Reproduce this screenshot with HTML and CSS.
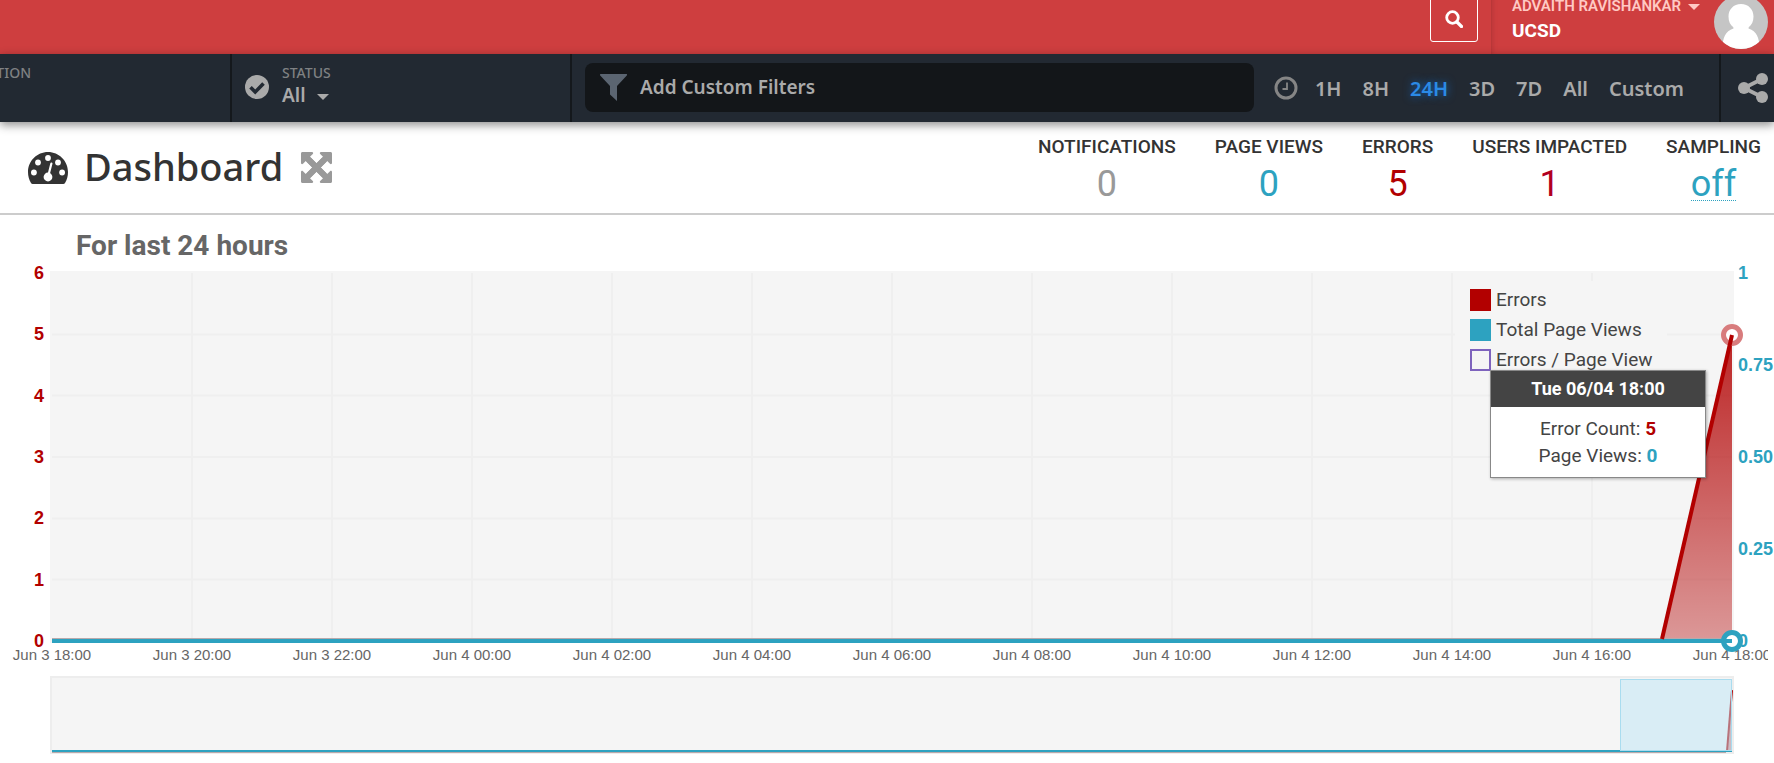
FILE: index.html
```html
<!DOCTYPE html>
<html lang="en">
<head>
<meta charset="utf-8">
<title>Dashboard</title>
<meta name="viewport" content="width=device-width, initial-scale=1">
<link rel="stylesheet" href="styles.css">
</head>
<body>
<header class="topbar">
  <button class="search" type="button" aria-label="Search">
    <svg viewBox="0 0 18 18" width="18" height="18"><circle cx="7.5" cy="7.5" r="5.8" fill="none" stroke="currentColor" stroke-width="2.8"/><path d="M12 12l4.5 4.5" stroke="currentColor" stroke-width="3.2" stroke-linecap="round"/></svg>
  </button>
  <div class="account">
    <button class="account-menu" type="button">
      <span class="account-name">ADVAITH RAVISHANKAR <i class="caret"></i></span>
      <span class="account-org">UCSD</span>
    </button>
    <svg class="avatar" viewBox="0 0 54 54" width="54" height="54" role="img" aria-label="Profile picture">
      <defs><clipPath id="round"><circle cx="27" cy="27" r="27"/></clipPath></defs>
      <g clip-path="url(#round)"><rect width="54" height="54" fill="#c5c5c5"/><g fill="#fff"><path d="M27 9c7.500 0 12.500 5.500 12.500 12.500 0 5-1.800 8.500-4.800 10.700l-.2 1.300C43 36 45 43 46 54H8c1-11 3-18 11.500-20.500l-.2-1.300c-3-2.200-4.800-5.700-4.800-10.700C14.500 14.500 19.500 9 27 9z"/></g></g>
    </svg>
  </div>
</header>

<nav class="filters">
  <div class="cell cell-location"><span class="cell-label">ATION</span></div>
  <div class="cell cell-status">
    <svg viewBox="0 0 24 24" width="24" height="24"><circle cx="12" cy="12" r="12" fill="#aaa"/><path d="M5.500 12.300l4.700 4.700 8.300-8.600" fill="none" stroke="#222932" stroke-width="3.600"/></svg>
    <div class="status">
      <span class="cell-label">STATUS</span>
      <button class="status-value" type="button">All <i class="caret"></i></button>
    </div>
  </div>
  <div class="cell cell-range">
    <button class="add-filter" type="button">
      <svg viewBox="0 0 27 27" width="27" height="27"><path d="M.5 0h26c.6 0 .7.900.3 1.400L17 12v15l-7-6.500V12L.2 1.400C-.2.900 0 0 .5 0z" fill="#5b6571"/></svg>
      Add Custom Filters
    </button>
    <div class="ranges">
      <svg viewBox="0 0 24 24" width="24" height="24" fill="none" stroke="#858585"><circle cx="12" cy="12" r="10" stroke-width="3"/><path d="M13 6.500V13H8.500" stroke-width="1.800"/></svg>
      <button type="button">1H</button>
      <button type="button">8H</button>
      <button type="button" class="active">24H</button>
      <button type="button">3D</button>
      <button type="button">7D</button>
      <button type="button">All</button>
      <button type="button">Custom</button>
    </div>
  </div>
  <button class="share" type="button" aria-label="Share">
    <svg viewBox="0 0 30 30" width="30" height="30"><path d="M24 6L6 15l18 9" fill="none" stroke="#aaa" stroke-width="3.800"/><g fill="#aaa"><circle cx="6" cy="15" r="6"/><circle cx="24" cy="6" r="6"/><circle cx="24" cy="24" r="6"/></g></svg>
  </button>
</nav>

<section class="heading">
  <svg viewBox="0 0 40 32" width="40" height="32"><path d="M20 0C9 0 0 9 0 20c0 4 1 7.700 3 11 .4.700.900 1 1.700 1h30.600c.8 0 1.300-.3 1.700-1 2-3.300 3-7 3-11C40 9 31 0 20 0z" fill="#333"/><g fill="#fff"><circle cx="20" cy="6" r="2.900"/><circle cx="10" cy="10.500" r="2.900"/><circle cx="30" cy="10.500" r="2.900"/><circle cx="5.900" cy="20.500" r="2.900"/><circle cx="34.100" cy="20.500" r="2.900"/><circle cx="20" cy="25" r="4.400"/></g><path d="M20.500 23l2.900-11.500" stroke="#fff" stroke-width="2.200" stroke-linecap="round"/></svg>
  <h1>Dashboard</h1>
  <button class="expand" type="button" aria-label="Full screen">
    <svg viewBox="0 0 31 31" width="31" height="31" fill="#999"><path id="arrow" d="M1.500 0H11c1.200 0 1.500 1.300.8 2L9 4.800 25.500 21.300 26 26 21.300 25.500 4.800 9 2 11.800c-.7.700-2 .4-2-.8V1.500C0 .6.600 0 1.500 0z"/><use href="#arrow" transform="rotate(90 15.500 15.500)"/><use href="#arrow" transform="rotate(180 15.500 15.500)"/><use href="#arrow" transform="rotate(270 15.500 15.500)"/></svg>
  </button>
  <dl class="stats">
    <div><dt>NOTIFICATIONS</dt><dd class="muted">0</dd></div>
    <div><dt>PAGE VIEWS</dt><dd class="blue">0</dd></div>
    <div><dt>ERRORS</dt><dd class="red">5</dd></div>
    <div><dt>USERS IMPACTED</dt><dd class="crimson">1</dd></div>
    <div><dt>SAMPLING</dt><dd><a href="#">off</a></dd></div>
  </dl>
</section>

<main class="chart">
  <h2>For last 24 hours</h2>
  <div class="plot-row">
    <div class="axis axis-left"><span>6</span><span>5</span><span>4</span><span>3</span><span>2</span><span>1</span><span>0</span></div>
    <div class="plot">
      <svg class="canvas" viewBox="0 0 1680 368" preserveAspectRatio="none">
        <defs><linearGradient id="fade" x1="0" y1="0" x2="0" y2="1"><stop offset="0" stop-color="#b20000" stop-opacity=".85"/><stop offset="1" stop-color="#b20000" stop-opacity=".38"/></linearGradient></defs>
        <path d="M140 0V368M280 0V368M420 0V368M560 0V368M700 0V368M840 0V368M980 0V368M1120 0V368M1260 0V368M1400 0V368M1540 0V368M0 61.500H1680M0 122.500H1680M0 184H1680M0 245.500H1680M0 306.500H1680" fill="none" stroke="#efefef" stroke-width="2"/>
        <path d="M1610 368L1680 62V368z" fill="url(#fade)"/>
        <path d="M0 366H1680" stroke="#b9a9ab" stroke-width="2"/>
        <path d="M0 368H1680" stroke="#2da2c0" stroke-width="4"/>
      </svg>
      <i class="marker marker-errors"></i>
      <i class="marker marker-views"></i>
      <svg class="canvas trace" viewBox="0 0 1680 368" preserveAspectRatio="none">
        <path d="M1610 366L1680 62" fill="none" stroke="#b20000" stroke-width="4"/>
        <path d="M1670 368H1680" stroke="#2da2c0" stroke-width="4"/>
      </svg>
      <ul class="legend">
        <li><i class="swatch swatch-errors"></i>Errors</li>
        <li><i class="swatch swatch-views"></i>Total Page Views</li>
        <li><i class="swatch swatch-ratio"></i>Errors / Page View</li>
      </ul>
      <div class="tooltip" role="tooltip">
        <div class="tooltip-title">Tue 06/04 18:00</div>
        <div class="tooltip-body">
          <div>Error Count: <b class="red">5</b></div>
          <div>Page Views: <b class="blue">0</b></div>
        </div>
      </div>
    </div>
    <div class="axis axis-right"><span>1</span><span>0.75</span><span>0.50</span><span>0.25</span><span>0</span></div>
  </div>
  <div class="times">
    <span>Jun 3 18:00</span><span>Jun 3 20:00</span><span>Jun 3 22:00</span><span>Jun 4 00:00</span><span>Jun 4 02:00</span><span>Jun 4 04:00</span><span>Jun 4 06:00</span><span>Jun 4 08:00</span><span>Jun 4 10:00</span><span>Jun 4 12:00</span><span>Jun 4 14:00</span><span>Jun 4 16:00</span><span>Jun 4 18:00</span>
  </div>
  <div class="overview">
    <svg class="canvas" viewBox="0 0 1680 73" preserveAspectRatio="none">
      <path d="M1675 72L1680 12V72z" fill="#b20000" fill-opacity=".4"/>
      <path d="M1675 72L1680 12" stroke="#b20000" stroke-width="2"/>
      <path d="M0 73H1674" stroke="#b9a9ab" stroke-width="2"/>
      <path d="M0 72H1680" stroke="#2da2c0" stroke-width="2"/>
    </svg>
    <div class="selection"></div>
  </div>
</main>
</body>
</html>
```
FILE: styles.css
```css
* { box-sizing: border-box; }
body {
  margin: 0;
  overflow-x: hidden;
  background: #fff;
  color: #333;
  font-family: Roboto, "Liberation Sans", sans-serif;
}
button {
  padding: 0;
  border: 0;
  background: none;
  color: inherit;
  font: inherit;
  text-align: left;
  cursor: pointer;
}
svg { display: block; flex: none; }

.red { color: #b20000; }
.crimson { color: #b2001e; }
.blue { color: #2da2c0; }
.muted { color: #999; }
.caret {
  display: inline-block;
  border: 6px solid transparent;
  border-top-color: currentColor;
  border-bottom: 0;
  vertical-align: middle;
}

/* Top bar */
.topbar {
  display: flex;
  justify-content: flex-end;
  align-items: flex-end;
  height: 54px;
  overflow: hidden;
  background: #ce3e3f;
  color: #fff;
}
.search {
  display: flex;
  align-items: center;
  justify-content: center;
  width: 48px;
  height: 46px;
  margin: 0 13px 12px 0;
  border: 1px solid #fff;
  border-radius: 3px;
}
.account {
  display: flex;
  align-items: flex-end;
  justify-content: space-between;
  width: 283px;
  padding: 0 6px 5px 20px;
  border-left: 1px solid #b93738;
  box-shadow: inset 3px 0 4px -2px #b93738;
}
.account-menu { padding-bottom: 5px; }
.account-name, .account-org { display: block; white-space: nowrap; }
.account-name {
  color: #ffc9c4;
  font-size: 15px;
  font-weight: 600;
  line-height: 24px;
}
.account-name .caret { margin-left: 3px; }
.account-org { font-size: 19px; font-weight: 700; line-height: 26px; }

/* Filter bar */
.filters {
  position: relative;
  display: flex;
  height: 68px;
  background: #222932;
  color: #aaa;
  box-shadow: 0 3px 9px rgba(0, 0, 0, .45);
  font-family: "Noto Sans", sans-serif;
  font-weight: 600;
}
.cell { display: flex; }
.cell-label {
  color: #7f8183;
  font-size: 14px;
  font-weight: 500;
  line-height: 20px;
}
.cell-location {
  flex: 0 0 230px;
  justify-content: flex-end;
  padding: 9px 199px 0 0;
  overflow: hidden;
}
.cell-status {
  flex: 0 0 342px;
  align-items: flex-start;
  gap: 13px;
  padding: 9px 13px;
  border: solid #14181c;
  border-width: 0 2px;
}
.cell-status > svg { margin-top: 12px; }
.status { display: flex; flex-direction: column; }
.status-value { font-size: 19px; line-height: 24px; }
.status-value .caret { margin-left: 7px; }
.cell-range {
  flex: 1;
  align-items: center;
  gap: 20px;
  padding: 0 35px 2px 13px;
}
.add-filter {
  display: flex;
  flex: 1;
  align-items: center;
  gap: 13px;
  height: 49px;
  padding: 0 15px;
  border-radius: 8px;
  background: #131619;
  font-size: 19px;
}
.ranges {
  display: flex;
  align-items: center;
  gap: 21px;
  padding-top: 2px;
  font-size: 20px;
}
.ranges svg { margin-right: -4px; }
.ranges .active { color: #2b8ae6; text-shadow: 0 0 8px #1468bd; }
.share { flex: none; padding: 0 6px 0 17px; border-left: 2px solid #14181c; }

/* Page heading */
.heading {
  display: flex;
  align-items: center;
  padding: 0 13px 0 28px;
  border-bottom: 2px solid #ccc;
}
h1 {
  margin: 0 18px 4px 16px;
  font-family: "Noto Sans", sans-serif;
  font-size: 38px;
  font-weight: 500;
  line-height: 52px;
}
.stats {
  display: flex;
  gap: 39px;
  margin: 0 0 0 auto;
  padding: 12px 0 5px;
  text-align: center;
}
.stats dt { font-size: 19px; font-weight: 500; line-height: 26px; }
.stats dd {
  margin: 1px 0 0;
  font-size: 36px;
  font-weight: 400;
  line-height: 47px;
}
.stats a {
  display: inline-block;
  border-bottom: 1px dotted;
  color: #2da2c0;
  line-height: 32px;
  text-decoration: none;
}

/* Chart */
h2 {
  margin: 0;
  padding: 15px 76px 9px;
  color: #666;
  font-size: 28px;
  font-weight: 700;
  line-height: 32px;
}
.plot-row { display: flex; }
.axis {
  display: flex;
  flex-direction: column;
  justify-content: space-between;
  padding: 2px 0;
  font: bold 18px "Liberation Sans", sans-serif;
}
.axis span { height: 0; line-height: 0; }
.axis-left {
  width: 50px;
  padding-right: 6px;
  color: #b20000;
  text-align: right;
}
.axis-right { width: 40px; padding-left: 4px; color: #2da2c0; }
.plot {
  position: relative;
  flex: 1;
  height: 372px;
  padding: 2px;
  background: #f5f5f5;
}
.canvas { width: 100%; height: 100%; overflow: visible; }
.trace { position: absolute; inset: 0; padding: 2px; }
.marker {
  position: absolute;
  right: -9px;
  width: 22px;
  height: 22px;
  border: 5px solid;
  border-radius: 50%;
  background: #fff;
}
.marker-errors { top: 53px; border-color: #d87c7d; }
.marker-views { bottom: -9px; border-color: #2da2c0; }
.legend {
  position: absolute;
  top: 10px;
  right: 67px;
  width: 212px;
  margin: 0;
  padding: 4px 15px;
  background: #f5f5f5;
  color: #444;
  list-style: none;
  font-size: 19px;
  line-height: 30px;
}
.legend li { display: flex; align-items: center; gap: 5px; white-space: nowrap; }
.swatch { flex: none; width: 21px; height: 22px; }
.swatch-errors { background: #b20000; }
.swatch-views { background: #2da2c0; }
.swatch-ratio { border: 2px solid #7e63bd; }
.tooltip {
  position: absolute;
  top: 99px;
  right: 28px;
  width: 216px;
  border: 1px solid #888;
  background: #fff;
  box-shadow: 1px 1px 3px rgba(0, 0, 0, .3);
  color: #444;
  font-size: 19px;
  line-height: 27px;
  text-align: center;
}
.tooltip-title {
  background: #444;
  color: #fff;
  font-size: 18px;
  font-weight: 700;
  line-height: 36px;
}
.tooltip-body { padding: 8px 0; }
.times {
  display: flex;
  justify-content: space-between;
  margin: 0 6px 0 0;
  padding: 3px 36px 12px 52px;
  overflow: hidden;
  color: #666;
  font: 15px/18px "Liberation Sans", sans-serif;
}
.times span {
  display: flex;
  justify-content: center;
  width: 0;
  white-space: nowrap;
}
.overview {
  position: relative;
  height: 78px;
  margin: 0 40px 9px 50px;
  border: 2px solid #ededed;
  background: #f5f5f5;
}
.selection {
  position: absolute;
  top: 1px;
  right: 0;
  bottom: 1px;
  width: 112px;
  border: 1px solid #a9dcef;
  background: rgba(190, 230, 245, .5);
}
```
